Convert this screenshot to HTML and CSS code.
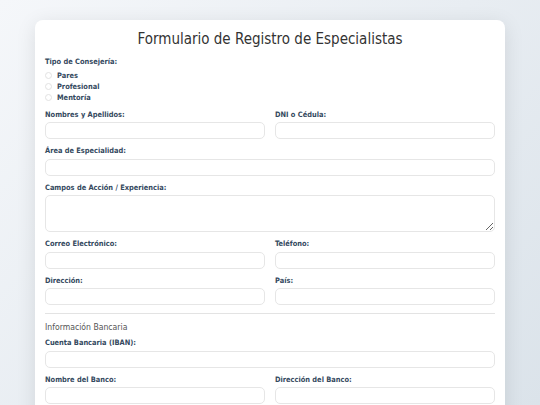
FILE: index.html
```html
<!DOCTYPE html>
<html lang="es">
<head>
    <meta charset="UTF-8">
    <meta name="viewport" content="width=device-width, initial-scale=1.0">
    <title>Registro de Especialistas</title>
    <link rel="stylesheet" href="styles.css">
</head>
<body>
<main class="card">
    <h1>Formulario de Registro de Especialistas</h1>
    <form>
        <div class="field">
            <label class="lbl">Tipo de Consejería:</label>
            <label class="radio"><input type="radio" name="tipo" value="pares"> Pares</label>
            <label class="radio"><input type="radio" name="tipo" value="profesional"> Profesional</label>
            <label class="radio"><input type="radio" name="tipo" value="mentoria"> Mentoría</label>
        </div>

        <div class="row">
            <div class="field">
                <label class="lbl" for="nombres">Nombres y Apellidos:</label>
                <input type="text" id="nombres">
            </div>
            <div class="field">
                <label class="lbl" for="dni">DNI o Cédula:</label>
                <input type="text" id="dni">
            </div>
        </div>

        <div class="field">
            <label class="lbl" for="area">Área de Especialidad:</label>
            <input type="text" id="area">
        </div>

        <div class="field">
            <label class="lbl" for="campos">Campos de Acción / Experiencia:</label>
            <textarea id="campos"></textarea>
        </div>

        <div class="row">
            <div class="field">
                <label class="lbl" for="correo">Correo Electrónico:</label>
                <input type="email" id="correo">
            </div>
            <div class="field">
                <label class="lbl" for="telefono">Teléfono:</label>
                <input type="tel" id="telefono">
            </div>
        </div>

        <div class="row">
            <div class="field">
                <label class="lbl" for="direccion">Dirección:</label>
                <input type="text" id="direccion">
            </div>
            <div class="field">
                <label class="lbl" for="pais">País:</label>
                <input type="text" id="pais">
            </div>
        </div>

        <hr>
        <h2>Información Bancaria</h2>

        <div class="field">
            <label class="lbl" for="iban">Cuenta Bancaria (IBAN):</label>
            <input type="text" id="iban">
        </div>

        <div class="row">
            <div class="field">
                <label class="lbl" for="banco">Nombre del Banco:</label>
                <input type="text" id="banco">
            </div>
            <div class="field">
                <label class="lbl" for="dirbanco">Dirección del Banco:</label>
                <input type="text" id="dirbanco">
            </div>
        </div>

        <div class="field">
            <label class="lbl" for="swift">Código SWIFT / BIC:</label>
            <input type="text" id="swift">
        </div>

        <button type="submit" class="btn">Registrar</button>
    </form>
</main>
</body>
</html>
```

FILE: styles.css
```css
* {
    margin: 0;
    padding: 0;
    box-sizing: border-box;
}

body {
    font-family: "DejaVu Sans Condensed", "DejaVu Sans", sans-serif;
    font-stretch: condensed;
    background: linear-gradient(135deg, #f5f7fa 0%, #dbe3ea 100%) fixed;
    min-height: 100vh;
    padding: 20px 0;
}

.card {
    width: 470px;
    margin: 0 auto;
    background-color: white;
    border-radius: 8px;
    padding: 10px;
    box-shadow: 0 4px 20px rgba(0, 0, 0, 0.1);
}

h1 {
    font-size: 15px;
    line-height: 18px;
    font-weight: normal;
    color: #333;
    text-align: center;
    margin-bottom: 9px;
}

h2 {
    font-size: 8.6px;
    line-height: 12px;
    font-weight: normal;
    color: #555;
    margin: 7px 0 5px;
}

hr {
    border: none;
    border-top: 1px solid #e3e3e3;
    margin-top: 1px;
}

.row {
    display: grid;
    grid-template-columns: 1fr 1fr;
    column-gap: 10px;
}

.field {
    margin-bottom: 7px;
}

.lbl {
    display: block;
    font-size: 7.4px;
    line-height: 10px;
    font-weight: bold;
    color: #34495e;
    margin-bottom: 2.5px;
}

.field .lbl:first-child + .radio {
    margin-top: 1.5px;
}

.radio {
    display: flex;
    align-items: center;
    gap: 5px;
    font-size: 7.4px;
    line-height: 11px;
    font-weight: bold;
    color: #34495e;
}

.radio input {
    appearance: none;
    width: 7px;
    height: 7px;
    border: 1px solid #e2e2e2;
    border-radius: 50%;
    background: white;
}

input[type="text"],
input[type="email"],
input[type="tel"],
textarea {
    display: block;
    width: 100%;
    height: 17px;
    border: 1px solid #e6e6e6;
    border-radius: 5px;
    padding: 0 5px;
    font-family: inherit;
    font-size: 8px;
    background: white;
}

textarea {
    height: 37px;
    padding: 5px;
    resize: vertical;
}

.btn {
    display: block;
    width: 100%;
    padding: 6px;
    margin-top: 5px;
    border: none;
    border-radius: 5px;
    background-color: #3498db;
    color: white;
    font-family: inherit;
    font-size: 9px;
    font-weight: bold;
}
```
